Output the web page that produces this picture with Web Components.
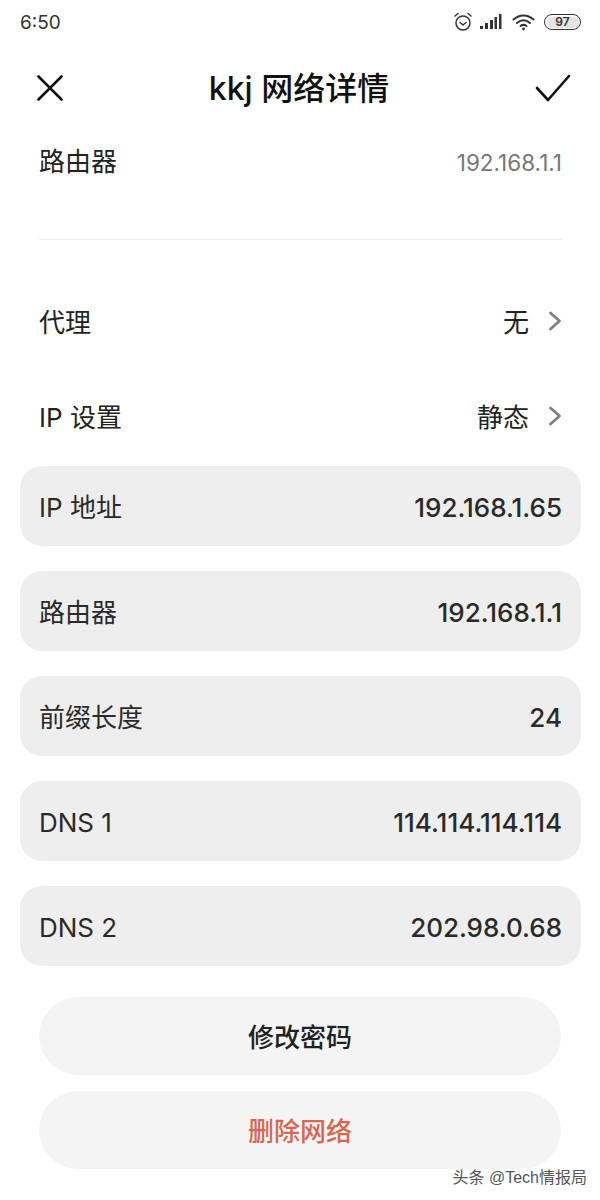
<!DOCTYPE html>
<html>
<head>
<meta charset="utf-8">
<style>
html,body{margin:0;padding:0;background:#fff;}
body{width:600px;height:1200px;overflow:hidden;font-family:Inter,"Noto Sans CJK SC",sans-serif;color:#222;}
</style>
</head>
<body>
<status-bar></status-bar>
<title-bar>kkj 网络详情</title-bar>
<plain-row style="--h:46px;--top:5px;--pad-b:56px" value="192.168.1.1" muted>路由器</plain-row>
<div style="height:1px;background:#eeeeee;margin:0 38px 0 39px"></div>
<plain-row style="--h:95px;--top:33px" value="无" arrow>代理</plain-row>
<plain-row style="--h:96px;--top:0px" value="静态" arrow>IP 设置</plain-row>
<field-list>
  <field-row value="192.168.1.65">IP 地址</field-row>
  <field-row value="192.168.1.1">路由器</field-row>
  <field-row value="24">前缀长度</field-row>
  <field-row latin value="114.114.114.114">DNS 1</field-row>
  <field-row latin value="202.98.0.68">DNS 2</field-row>
</field-list>
<pill-button>修改密码</pill-button>
<pill-button danger>删除网络</pill-button>
<water-mark>头条 @Tech情报局</water-mark>

<script>
class StatusBar extends HTMLElement{
  constructor(){
    super();
    this.attachShadow({mode:"open"}).innerHTML=`
    <style>
      :host{display:flex;align-items:center;height:44px;padding:0 19px 0 20px;font-size:19px;color:#333;}
      .time{flex:1;}
      .icons{display:flex;align-items:center;gap:7px;}
      svg{display:block;}
      .batt{width:37px;height:16px;box-sizing:border-box;border:1.5px solid #333;border-radius:8px;padding:1.5px;display:block;}
      .batt b{display:block;height:100%;border-radius:5px;background:#e4e4e4;font-size:12px;line-height:10px;text-align:center;font-weight:600;}
    </style>
    <span class="time">6:50</span>
    <span class="icons">
      <svg width="20" height="20" viewBox="0 0 20 20" fill="none" stroke="#333" stroke-width="1.5" stroke-linecap="round" stroke-linejoin="round">
        <circle cx="10" cy="11" r="7"/><path d="M7 10.500l3 2.500 3-2.500M2 4l3-2.500M18 4l-3-2.500"/>
      </svg>
      <svg width="22" height="16" viewBox="0 0 22 16" fill="#333">
        <rect x="0" y="12" width="3" height="3"/><rect x="5" y="9" width="3" height="6"/><rect x="10" y="6" width="3" height="9"/><rect x="14.500" y="3" width="2.500" height="12"/><rect x="19" y="0" width="2.500" height="15"/>
      </svg>
      <svg width="24" height="18" viewBox="0 0 24 18" fill="none" stroke="#333" stroke-width="2" stroke-linecap="round" style="margin:0 1px 0 3px">
        <path d="M1.500 6.500C7.500 1 15.500 1 21.500 6.500M5 10c4-3.400 9-3.400 13 0M8.500 13c2-1.500 4-1.500 6 0"/><circle cx="11.500" cy="16" r="1.400" fill="#333" stroke="none"/>
      </svg>
      <span class="batt"><b>97</b></span>
    </span>`;
  }
}
class TitleBar extends HTMLElement{
  constructor(){
    super();
    this.attachShadow({mode:"open"}).innerHTML=`
    <style>
      :host{display:flex;align-items:center;justify-content:space-between;height:88px;padding:0 37px;font-size:32px;font-weight:500;color:#111;}
      svg{display:block;}
      .t{flex:1;text-align:center;margin-top:-4px;}
    </style>
    <svg width="26" height="26" viewBox="0 0 26 26" stroke="#111" stroke-width="2.600" stroke-linecap="round" fill="none"><path d="M1.500 1.500l23 23M24.500 1.500l-23 23"/></svg>
    <span class="t"><slot></slot></span>
    <svg width="36" height="28" viewBox="0 0 36 28" stroke="#111" stroke-width="2.600" stroke-linecap="round" stroke-linejoin="round" fill="none" style="margin-right:-8px"><path d="M2 14l11 12L34 2"/></svg>`;
  }
}
class PlainRow extends HTMLElement{
  constructor(){
    super();
    this.attachShadow({mode:"open"});
  }
  connectedCallback(){
    let arrow=this.hasAttribute("arrow")?`<svg width="14" height="20" viewBox="0 0 14 20" fill="none" stroke="#808080" stroke-width="2.800" stroke-linecap="round" stroke-linejoin="round"><path d="M2.500 2l9 8-9 8"/></svg>`:"";
    let cls=this.hasAttribute("muted")?"v muted":"v";
    this.shadowRoot.innerHTML=`
    <style>
      :host{display:flex;align-items:center;justify-content:space-between;height:var(--h);margin-top:var(--top,0);margin-bottom:var(--pad-b,0);padding:0 38px 0 39px;font-size:26px;color:#222;}
      .r{display:flex;align-items:center;gap:19px;}
      .v{color:#222;padding-top:4px;}
      .l{padding-top:4px;}
      .muted{color:#777;font-size:22.500px;}
      span{line-height:1.2;}
    </style>
    <span class="l"><slot></slot></span>
    <span class="r"><span class="${cls}">${this.getAttribute("value")}</span>${arrow}</span>`;
  }
}
class FieldList extends HTMLElement{
  constructor(){
    super();
    this.attachShadow({mode:"open"}).innerHTML=`
    <style>:host{display:flex;flex-direction:column;gap:25px;margin:2px 19px 0 20px;}</style>
    <slot></slot>`;
  }
}
class FieldRow extends HTMLElement{
  constructor(){
    super();
    this.attachShadow({mode:"open"});
  }
  connectedCallback(){
    this.shadowRoot.innerHTML=`
    <style>
      :host{display:flex;align-items:center;justify-content:space-between;height:80px;padding:0 19px;border-radius:22px;background:#eeeeee;font-size:26px;color:#2a2a2a;}
      .l{padding-bottom:2px;}
      :host([latin]) .l{padding-bottom:0;padding-top:2px;}
      .v{font-weight:500;padding-top:2px;}
    </style>
    <span class="l"><slot></slot></span>
    <span class="v">${this.getAttribute("value")}</span>`;
  }
}
class PillButton extends HTMLElement{
  constructor(){
    super();
    this.attachShadow({mode:"open"}).innerHTML=`
    <style>
      :host{display:flex;align-items:center;justify-content:center;height:78px;margin:0 39px 16px;border-radius:39px;background:#f4f4f4;font-size:26px;font-weight:500;color:#222;}
      :host([danger]){color:#d9674f;}
      :host(:not([danger])){margin-top:31px;}
      span{padding-bottom:2px;}
    </style>
    <span><slot></slot></span>`;
  }
}
class WaterMark extends HTMLElement{
  constructor(){
    super();
    this.attachShadow({mode:"open"}).innerHTML=`
    <style>
      :host{position:absolute;right:13px;top:1168px;font-size:16px;line-height:20px;color:#555;font-family:"Liberation Sans","Noto Sans CJK SC",sans-serif;}
    </style>
    <slot></slot>`;
  }
}
customElements.define("status-bar",StatusBar);
customElements.define("title-bar",TitleBar);
customElements.define("plain-row",PlainRow);
customElements.define("field-list",FieldList);
customElements.define("field-row",FieldRow);
customElements.define("pill-button",PillButton);
customElements.define("water-mark",WaterMark);
</script>
</body>
</html>
